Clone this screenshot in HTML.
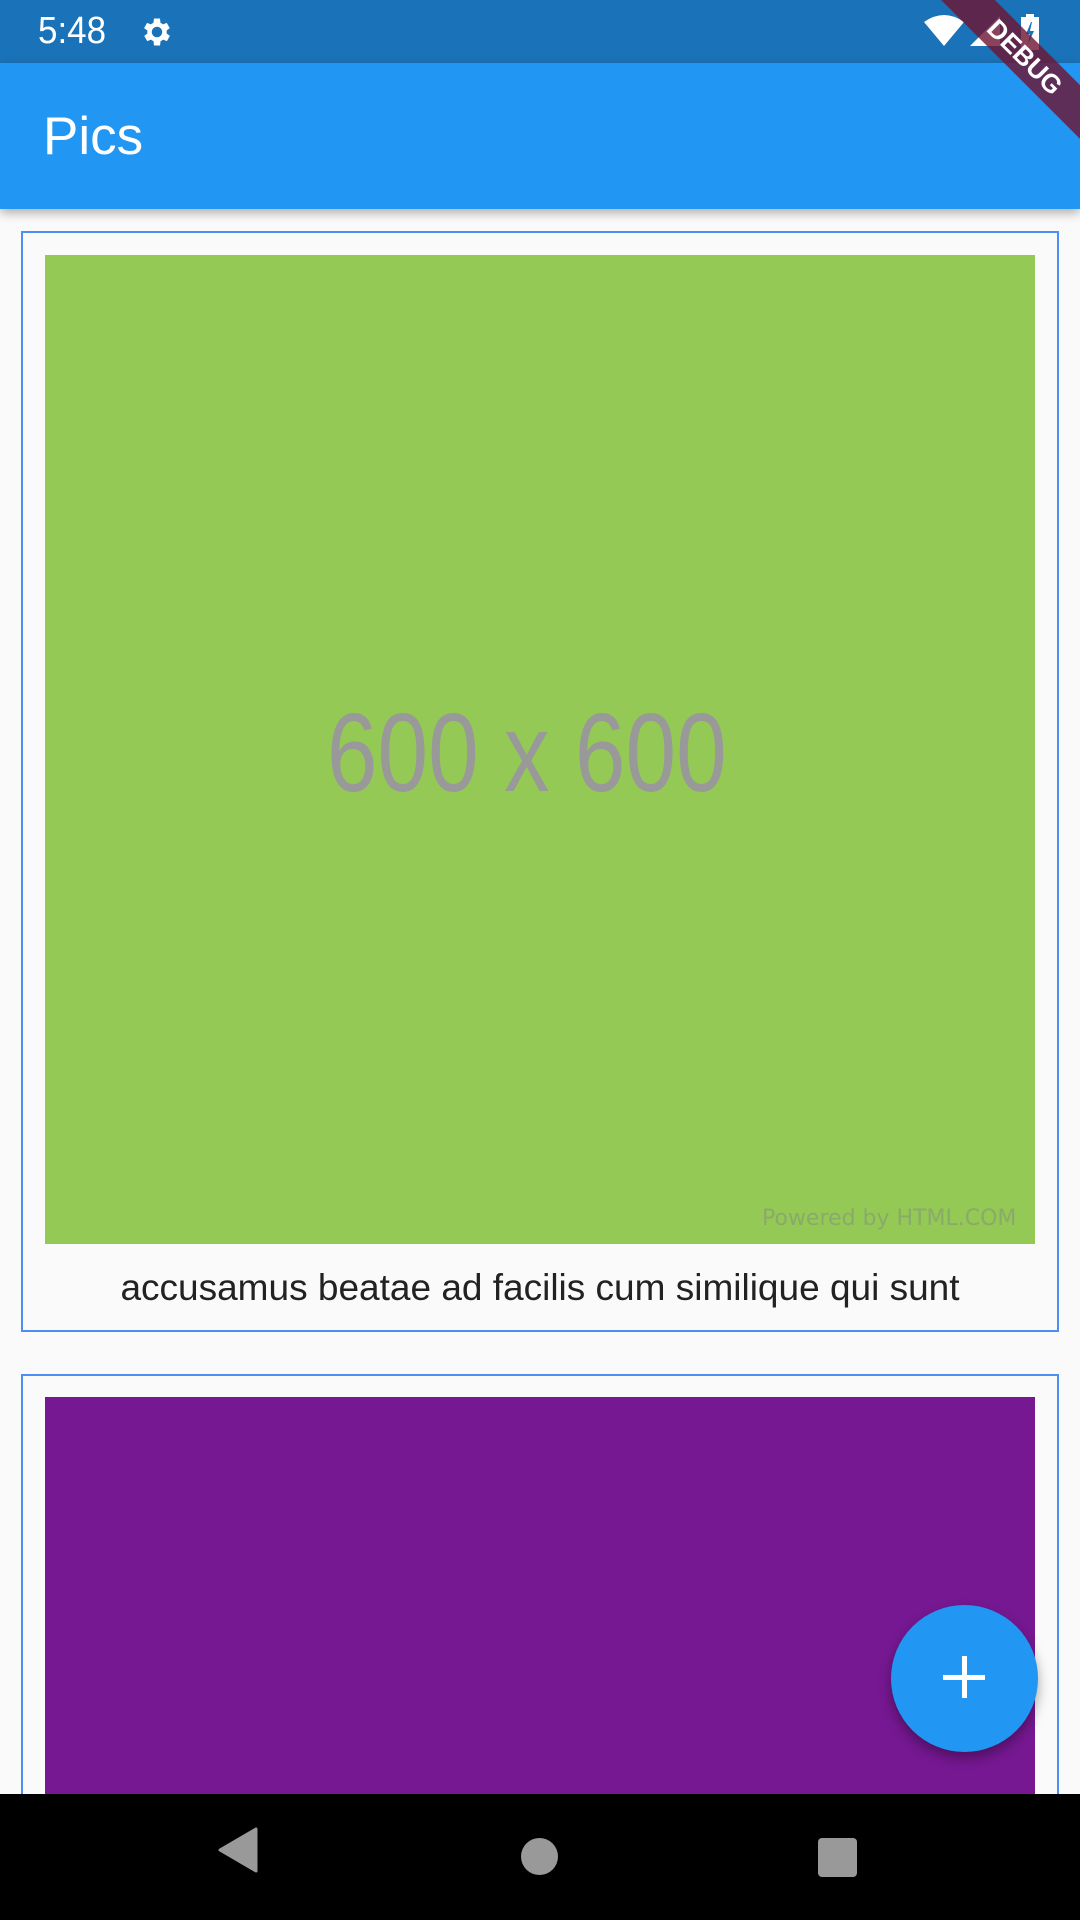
<!DOCTYPE html>
<html style="overflow:hidden;width:1080px;height:1920px"><head><meta charset="utf-8"><style>
body{margin:0;width:1080px;height:1920px;overflow:hidden;background:#fafafa;font-family:"Liberation Sans",sans-serif;position:relative}
.abs{position:absolute}
</style></head><body>
<div class="abs" style="left:0;top:0;width:1080px;height:63px;background:#1a73b9"></div>
<div class="abs" style="left:38px;top:10px;color:#fff;font-size:38px;transform:scaleX(.92);transform-origin:left">5:48</div>
<svg class="abs" style="left:139px;top:14px" width="36" height="36" viewBox="0 0 24 24"><path fill="#fff" d="M19.4 13a7.5 7.5 0 0 0 0-2l2.1-1.6-2-3.5-2.5 1a7 7 0 0 0-1.7-1L15 3h-4l-.4 2.9a7 7 0 0 0-1.7 1l-2.5-1-2 3.5L6.6 11a7.5 7.5 0 0 0 0 2l-2.1 1.6 2 3.5 2.5-1a7 7 0 0 0 1.7 1L11 21h4l.4-2.9a7 7 0 0 0 1.7-1l2.5 1 2-3.5zM13 15.5a3.5 3.5 0 1 1 0-7 3.5 3.5 0 0 1 0 7z" transform="translate(-1 0)"/></svg>
<svg class="abs" style="left:924px;top:14px" width="40" height="34" viewBox="0 0 40 34"><path fill="#fff" d="M0 8 Q20 -6 40 8 L20 32Z"/></svg>
<svg class="abs" style="left:970px;top:16px" width="30" height="30"><path fill="#fff" d="M30 0V30H0Z"/></svg>
<svg class="abs" style="left:1020px;top:14px" width="22" height="36"><rect x="1" y="3" width="18" height="33" fill="#fff"/><rect x="6" y="0" width="8" height="4" fill="#fff"/><path d="M11 8 6 20h4l-2 10 6-13h-4l2-9z" fill="#1a73b9"/></svg>
<div class="abs" style="left:0;top:63px;width:1080px;height:146px;background:#2196f3;box-shadow:0 4px 10px rgba(0,0,0,.3)"></div>
<div class="abs" style="left:43px;top:106px;color:#fff;font-size:53px;line-height:62px">Pics</div>
<div class="abs" style="left:895px;top:38px;width:260px;height:38px;background:rgba(110,20,50,.8);transform:rotate(45deg);color:#fff;font-weight:bold;font-size:26px;text-align:center;line-height:38px">DEBUG</div>
<div class="abs" style="left:21px;top:231px;width:1034px;height:1097px;border:2px solid #4d8ef5"></div>
<div class="abs" style="left:45px;top:255px;width:990px;height:989px;background:#94c955"></div>
<div class="abs" style="left:32px;top:688px;width:990px;text-align:center;color:#999;font-size:111px;line-height:130px"><span style="display:inline-block;transform:scaleX(.82)">600 x 600</span></div>
<div class="abs" style="left:762px;top:1206px;color:#8aaa6a;font-size:22px;font-family:'DejaVu Sans',sans-serif">Powered by HTML.COM</div>
<div class="abs" style="left:21px;top:1264px;width:1038px;text-align:center;color:#222;font-size:37px;line-height:48px">accusamus beatae ad facilis cum similique qui sunt</div>
<div class="abs" style="left:21px;top:1374px;width:1034px;height:500px;border:2px solid #4d8ef5"></div>
<div class="abs" style="left:45px;top:1397px;width:990px;height:420px;background:#761892"></div>
<div class="abs" style="left:891px;top:1605px;width:147px;height:147px;border-radius:50%;background:#2196f3;box-shadow:0 6px 12px rgba(0,0,0,.35)"></div>
<div class="abs" style="left:943px;top:1675px;width:42px;height:5px;background:#fff"></div>
<div class="abs" style="left:962px;top:1656px;width:5px;height:42px;background:#fff"></div>
<div class="abs" style="left:0;top:1794px;width:1080px;height:126px;background:#000"></div>
<svg class="abs" style="left:218px;top:1827px" width="40" height="46"><path d="M38 2V44L2 23Z" fill="#999" stroke="#999" stroke-width="3" stroke-linejoin="round"/></svg>
<div class="abs" style="left:521px;top:1838px;width:37px;height:37px;border-radius:50%;background:#999"></div>
<div class="abs" style="left:818px;top:1838px;width:39px;height:39px;border-radius:4px;background:#999"></div>
</body></html>
